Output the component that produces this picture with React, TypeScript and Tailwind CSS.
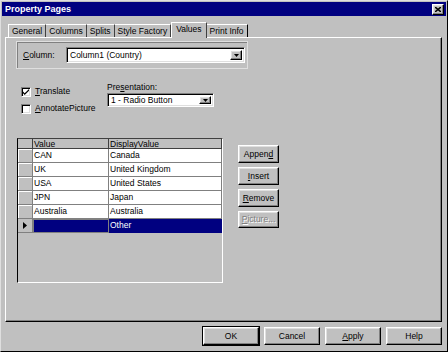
import React from "react";

const raised =
  "border border-t-white border-l-white border-b-black border-r-black shadow-[inset_-1px_-1px_0_#808080,inset_1px_1px_0_#dfdfdf]";
const sunken =
  "border border-t-[#808080] border-l-[#808080] border-b-white border-r-white shadow-[inset_1px_1px_0_#000,inset_-1px_-1px_0_#dfdfdf]";

function U({ c }: { c: string }) {
  return <span className="underline underline-offset-[1px]">{c}</span>;
}

function DropArrow() {
  return (
    <div className={`w-[12px] shrink-0 h-full flex items-center justify-center bg-[#c0c0c0] ${raised}`}>
      <svg width="5" height="3" viewBox="0 0 5 3">
        <path d="M0 0h5L2.5 3z" fill="#000" />
      </svg>
    </div>
  );
}

function Btn({ children, w = "w-[56px]", h = "h-[18px]", dis = false, def = false }: { children: React.ReactNode; w?: string; h?: string; dis?: boolean; def?: boolean }) {
  return (
    <div className={`${w} ${h} shrink-0 ${def ? "outline outline-1 outline-black" : ""} bg-[#c0c0c0] flex items-center justify-center ${raised} ${dis ? "text-[#808080] [text-shadow:1px_1px_0_#fff]" : "text-black"}`}>
      {children}
    </div>
  );
}

function Check({ checked, children }: { checked: boolean; children: React.ReactNode }) {
  return (
    <div className="flex items-center gap-[4px] h-[11px]">
      <div className={`w-[10px] h-[10px] shrink-0 bg-white ${sunken} flex items-center justify-center`}>
        {checked && (
          <svg width="6" height="6" viewBox="0 0 7 7">
            <path d="M0 3l2 2 5-5v2l-5 5-2-2z" fill="#000" />
          </svg>
        )}
      </div>
      <span className="whitespace-nowrap">{children}</span>
    </div>
  );
}

const rows = [
  ["CAN", "Canada"],
  ["UK", "United Kingdom"],
  ["USA", "United States"],
  ["JPN", "Japan"],
  ["Australia", "Australia"],
];

export default function App() {
  return (
    <div
      className="w-[448px] h-[352px] bg-[#c0c0c0] flex flex-col border border-t-[#dfdfdf] border-l-[#dfdfdf] border-b-black border-r-black text-[8.5px] leading-[11px] text-black"
      style={{ fontFamily: '"Liberation Sans", Arial, sans-serif' }}
    >
      {/* title bar */}
      <div className="mx-[1px] mt-[1px] h-[14px] bg-[#000080] flex items-center justify-between pl-[3px] pr-[2px]">
        <span className="text-white font-bold text-[9px]">Property Pages</span>
        <div className={`w-[12px] h-[11px] bg-[#c0c0c0] ${raised} flex items-center justify-center`}>
          <svg width="6" height="5" viewBox="0 0 6 5">
            <path d="M0 0L6 5M6 0L0 5" stroke="#000" strokeWidth="1.5" />
          </svg>
        </div>
      </div>

      {/* tabs */}
      <div className="mt-[6px] ml-[7px] flex items-end h-[15px] relative z-10">
        {["General", "Columns", "Splits", "Style Factory"].map((t) => (
          <div key={t} className="h-[13px] px-[3px] flex items-center border-r border-r-[#404040] border-t border-t-white first:border-l first:border-l-white whitespace-nowrap">
            {t}
          </div>
        ))}
        <div className="h-[16px] px-[4px] flex items-center bg-[#c0c0c0] border-t border-t-white border-l border-l-white border-r border-r-[#404040] -mb-[1px] pb-[2px]">
          Values
        </div>
        <div className="h-[13px] px-[3px] flex items-center border-t border-t-white border-r border-r-black whitespace-nowrap">
          Print Info
        </div>
      </div>

      {/* panel */}
      <div className="ml-[4px] w-[437px] h-[285px] border border-t-white border-l-white border-b-black border-r-black shadow-[inset_-1px_-1px_0_#808080] flex flex-col">
        {/* column group */}
        <div className="mt-[3px] ml-[10px] w-[232px] h-[28px] border border-[#dfdfdf] shadow-[inset_1px_1px_0_#808080] flex items-center pl-[6px]">
          <span className="w-[43px]">
            <U c="C" />olumn:
          </span>
          <div className={`w-[179px] h-[16px] bg-white ${sunken} flex items-stretch p-[2px]`}>
            <span className="flex-1 pl-[1px] leading-[10px]">Column1 (Country)</span>
            <DropArrow />
          </div>
        </div>

        {/* checkbox + presentation */}
        <div className="flex mt-[13px] ml-[15px]">
          <div className="flex flex-col gap-[6px] mt-[4px] w-[86px] shrink-0">
            <Check checked>
              <U c="T" />ranslate
            </Check>
            <Check checked={false}>
              <U c="A" />nnotatePicture
            </Check>
          </div>
          <div className="flex flex-col">
            <span className="h-[11px]">
              Pre<U c="s" />entation:
            </span>
            <div className={`w-[107px] h-[14px] bg-white ${sunken} flex items-stretch p-[2px]`}>
              <span className="flex-1 pl-[1px] leading-[9px]">1 - Radio Button</span>
              <DropArrow />
            </div>
          </div>
        </div>

        {/* grid + buttons */}
        <div className="flex mt-[24px] ml-[11px]">
          <div className="w-[206px] h-[145px] border-l border-t border-l-black border-t-[#404040] border-r border-b border-r-white border-b-white bg-[#c0c0c0] flex flex-col">
            <div className="flex h-[10px]">
              <div className="w-[15px] border-r border-b border-[#404040]" />
              <div className="w-[76px] border-r border-b border-[#404040] pl-[1px] leading-[10px]">Value</div>
              <div className="w-[113px] border-r border-b border-[#404040] pl-[1px] leading-[10px]">DisplayValue</div>
            </div>
            {rows.map(([a, b]) => (
              <div key={a} className="flex h-[14px]">
                <div className="w-[15px] border-r border-b border-[#808080] shadow-[inset_1px_1px_0_#fff]" />
                <div className="w-[76px] bg-white border-r border-b border-[#808080] pl-[1px] leading-[13px]">{a}</div>
                <div className="w-[113px] bg-white border-r border-b border-[#808080] pl-[1px] leading-[13px]">{b}</div>
              </div>
            ))}
            <div className="flex h-[14px]">
              <div className="w-[15px] border-r border-b border-[#808080] flex items-center justify-center">
                <svg width="4" height="7" viewBox="0 0 4 7">
                  <path d="M0 0L4 3.5L0 7z" fill="#000" />
                </svg>
              </div>
              <div className="w-[76px] bg-[#000080] border border-[#808080]" />
              <div className="w-[113px] bg-[#000080] text-white pl-[1px] leading-[13px]">Other</div>
            </div>
          </div>

          <div className="ml-[15px] mt-[7px] flex flex-col gap-[4px]">
            <Btn w="w-[41px]">
              Appen<U c="d" />
            </Btn>
            <Btn w="w-[41px]">
              <U c="I" />nsert
            </Btn>
            <Btn w="w-[41px]">
              <U c="R" />emove
            </Btn>
            <Btn w="w-[41px]" h="h-[17px]" dis>
              <U c="P" />icture...
            </Btn>
          </div>
        </div>
      </div>

      {/* bottom buttons */}
      <div className="flex justify-end gap-[5px] mt-[5px] mr-[5px]">
        <Btn def>OK</Btn>
        <Btn>Cancel</Btn>
        <Btn>
          <U c="A" />pply
        </Btn>
        <Btn>Help</Btn>
      </div>
    </div>
  );
}
